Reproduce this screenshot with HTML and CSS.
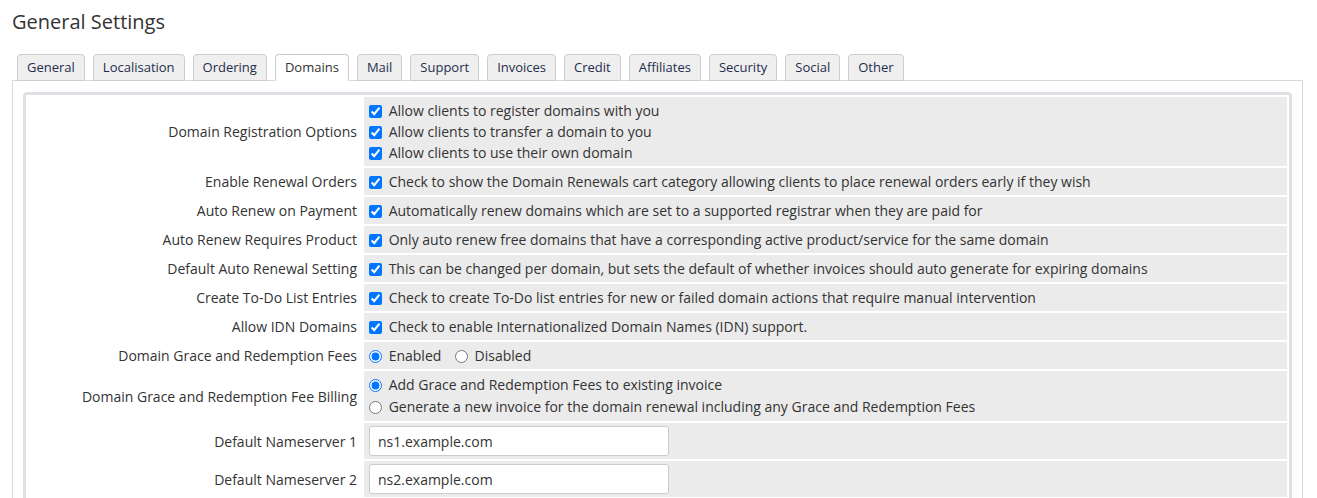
FILE: index.html
```html
<!DOCTYPE html>
<html lang="en">

<head>
    <meta charset="UTF-8" />
    <title>General Settings</title>
    <link rel="stylesheet" href="styles.css">
</head>

<body>
    <h1>General Settings</h1>

    <ul class="tabs">
        <li><a href="#">General</a></li>
        <li><a href="#">Localisation</a></li>
        <li><a href="#">Ordering</a></li>
        <li class="active"><a href="#">Domains</a></li>
        <li><a href="#">Mail</a></li>
        <li><a href="#">Support</a></li>
        <li><a href="#">Invoices</a></li>
        <li><a href="#">Credit</a></li>
        <li><a href="#">Affiliates</a></li>
        <li><a href="#">Security</a></li>
        <li><a href="#">Social</a></li>
        <li><a href="#">Other</a></li>
    </ul>

    <div class="tab-pane">
        <div class="form-box">
            <table class="form-table">
                <tr>
                    <td class="fieldlabel">Domain Registration Options</td>
                    <td class="fieldarea">
                        <label class="line"><input type="checkbox" checked> Allow clients to register domains with you</label>
                        <label class="line"><input type="checkbox" checked> Allow clients to transfer a domain to you</label>
                        <label class="line"><input type="checkbox" checked> Allow clients to use their own domain</label>
                    </td>
                </tr>
                <tr>
                    <td class="fieldlabel">Enable Renewal Orders</td>
                    <td class="fieldarea"><label><input type="checkbox" checked> Check to show the Domain Renewals cart category allowing clients to place renewal orders early if they wish</label></td>
                </tr>
                <tr>
                    <td class="fieldlabel">Auto Renew on Payment</td>
                    <td class="fieldarea"><label><input type="checkbox" checked> Automatically renew domains which are set to a supported registrar when they are paid for</label></td>
                </tr>
                <tr>
                    <td class="fieldlabel">Auto Renew Requires Product</td>
                    <td class="fieldarea"><label><input type="checkbox" checked> Only auto renew free domains that have a corresponding active product/service for the same domain</label></td>
                </tr>
                <tr>
                    <td class="fieldlabel">Default Auto Renewal Setting</td>
                    <td class="fieldarea"><label><input type="checkbox" checked> This can be changed per domain, but sets the default of whether invoices should auto generate for expiring domains</label></td>
                </tr>
                <tr>
                    <td class="fieldlabel">Create To-Do List Entries</td>
                    <td class="fieldarea"><label><input type="checkbox" checked> Check to create To-Do list entries for new or failed domain actions that require manual intervention</label></td>
                </tr>
                <tr>
                    <td class="fieldlabel">Allow IDN Domains</td>
                    <td class="fieldarea"><label><input type="checkbox" checked> Check to enable Internationalized Domain Names (IDN) support.</label></td>
                </tr>
                <tr>
                    <td class="fieldlabel">Domain Grace and Redemption Fees</td>
                    <td class="fieldarea">
                        <label class="inline"><input type="radio" name="gracefees" checked> Enabled</label>
                        <label class="inline"><input type="radio" name="gracefees"> Disabled</label>
                    </td>
                </tr>
                <tr>
                    <td class="fieldlabel">Domain Grace and Redemption Fee Billing</td>
                    <td class="fieldarea">
                        <label class="line radio-line"><input type="radio" name="gracebilling" checked> Add Grace and Redemption Fees to existing invoice</label>
                        <label class="line radio-line"><input type="radio" name="gracebilling"> Generate a new invoice for the domain renewal including any Grace and Redemption Fees</label>
                    </td>
                </tr>
                <tr>
                    <td class="fieldlabel">Default Nameserver 1</td>
                    <td class="fieldarea"><input type="text" class="form-input" value="ns1.example.com"></td>
                </tr>
                <tr>
                    <td class="fieldlabel">Default Nameserver 2</td>
                    <td class="fieldarea"><input type="text" class="form-input" value="ns2.example.com"></td>
                </tr>
            </table>
        </div>
    </div>
</body>

</html>
```

FILE: styles.css
```css
* {
    box-sizing: border-box;
}

body {
    margin: 0;
    padding: 0 14px 0 12px;
    background: #fff;
    color: #333;
    font-family: 'Open Sans', 'Noto Sans', sans-serif;
    font-size: 14px;
}

h1 {
    margin: 8px 0 0;
    font-size: 20px;
    font-weight: 400;
    line-height: 28px;
    color: #333;
}

/* tabs */

.tabs {
    display: flex;
    gap: 8px;
    list-style: none;
    margin: 18px 0 -1px;
    padding: 0 0 0 5px;
    position: relative;
    z-index: 1;
}

.tabs li a {
    display: block;
    padding: 3px 9px 4px;
    font-size: 13px;
    line-height: 18px;
    color: #1f2d4d;
    text-decoration: none;
    background: #efefef;
    border: 1px solid #ccc;
    border-radius: 4px 4px 0 0;
}

.tabs li.active a {
    background: #fff;
    color: #333;
    border-bottom-color: #fff;
}

.tab-pane {
    border: 1px solid #d9d9d9;
    padding: 11px 10px;
}

.form-box {
    border: 3px solid #dee2e6;
    border-radius: 4px;
}

/* settings table */

.form-table {
    width: 100%;
    border-spacing: 2px;
}

.fieldlabel {
    width: 334px;
    padding: 3px 5px;
    text-align: right;
    line-height: 21px;
    vertical-align: middle;
}

.fieldarea {
    padding: 3px 1px;
    background: #ebebeb;
    line-height: 21px;
    vertical-align: middle;
}

.fieldarea label {
    cursor: pointer;
}

.fieldarea .line {
    display: block;
}

.fieldarea .radio-line {
    line-height: 22px;
}

.fieldarea .inline {
    margin-right: 6px;
}

.fieldarea input[type="checkbox"] {
    margin: 3px 3px 3px 4px;
    vertical-align: -2px;
}

.fieldarea input[type="radio"] {
    margin: 3px 3px 3px 4px;
    vertical-align: -2px;
}

.form-input {
    display: block;
    width: 300px;
    height: 30px;
    margin: 0 0 0 4px;
    padding: 0 8px;
    border: 1px solid #ccc;
    border-radius: 3px;
    background: #fff;
    font-family: 'Open Sans', 'Noto Sans', sans-serif;
    font-size: 14px;
    color: #333;
}
```
